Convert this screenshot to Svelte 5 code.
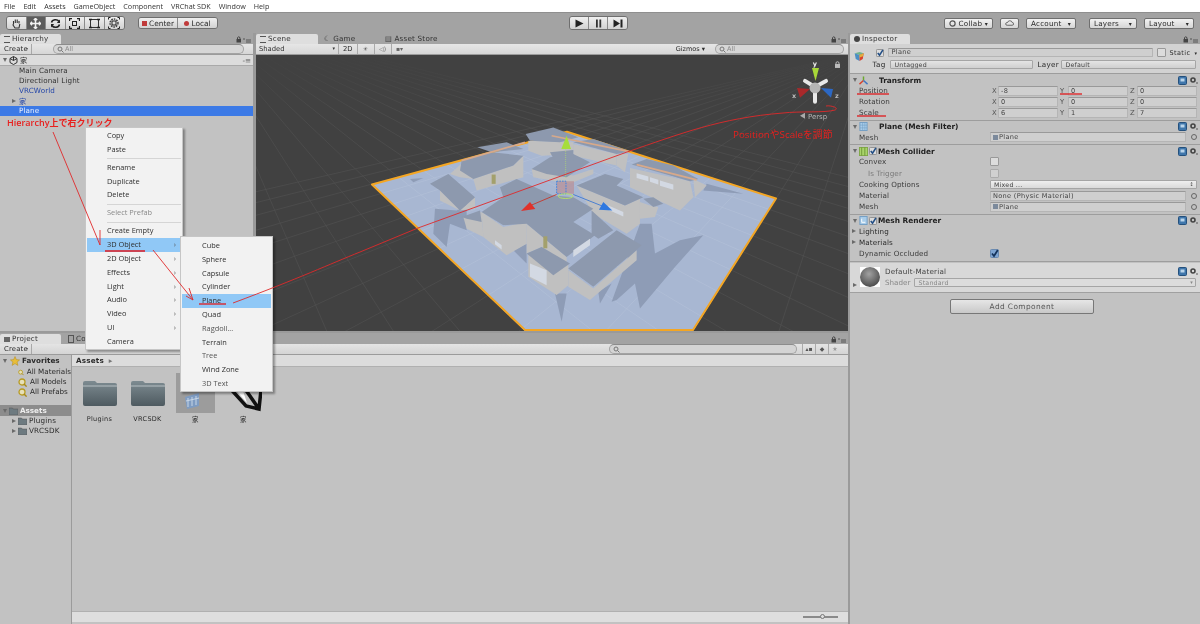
<script>
  const menus = ['File', 'Edit', 'Assets', 'GameObject', 'Component', 'VRChat SDK', 'Window', 'Help'];

  const mainMenu = [
    { t: 'Copy' }, { t: 'Paste' }, { sep: true },
    { t: 'Rename' }, { t: 'Duplicate' }, { t: 'Delete' }, { sep: true },
    { t: 'Select Prefab', off: true }, { sep: true },
    { t: 'Create Empty' },
    { t: '3D Object', sub: true, hl: true },
    { t: '2D Object', sub: true }, { t: 'Effects', sub: true }, { t: 'Light', sub: true },
    { t: 'Audio', sub: true }, { t: 'Video', sub: true }, { t: 'UI', sub: true },
    { t: 'Camera' }
  ];
  const subMenu = ['Cube', 'Sphere', 'Capsule', 'Cylinder', 'Plane', 'Quad', 'Ragdoll...', 'Terrain', 'Tree', 'Wind Zone', '3D Text'];

  const transformRows = [
    { label: 'Position', v: ['-8', '0', '0'] },
    { label: 'Rotation', v: ['0', '0', '0'] },
    { label: 'Scale', v: ['6', '1', '7'] }
  ];

  // scene geometry, in the coordinates of a 3x crop starting at 360,90
  const shadows = [
    '225,355 290,360 320,340 320,420 270,400 260,470 220,430',
    '755,635 840,400 875,400 885,490 960,450 1030,435 945,530 840,655 825,580 770,630',
    '585,610 620,610 605,695',
    '715,605 755,580 720,640',
    '1040,280 1150,310 1030,300',
    '150,265 190,262 160,275',
    '460,480 500,460 500,520'
  ];
  const walls = [
    '505,150 640,155 640,190 545,195 505,180',
    '640,160 770,190 770,225 640,195',
    '770,190 805,190 795,245 770,225',
    '240,300 300,360 345,320 345,355 300,360 240,330',
    '340,265 460,225 490,195 490,260 350,300',
    '270,250 315,210 340,265 300,260',
    '365,365 430,410 500,395 500,460 440,495 370,440',
    '310,380 365,365 370,440 320,415',
    '650,285 795,345 840,325 840,400 800,430 700,370',
    '810,232 990,272 1000,320 960,360 810,290',
    '1000,265 1040,285 1005,320',
    '840,335 870,345 895,350 885,380 840,385',
    '625,540 700,595 830,480 830,510 690,630 625,590',
    '505,490 625,520 625,585 590,615 505,560',
    '515,235 640,255 700,235 700,250 630,280 520,260',
    '500,400 620,500 620,520 545,470 500,490'
  ];
  const roofs = [
    '497,130 580,110 655,140 600,155 510,150',
    '640,155 700,145 810,182 770,190',
    '352,170 440,155 490,175 395,185',
    '305,210 395,185 490,195 460,225 340,265 300,240',
    '210,280 265,250 345,320 300,360 240,300',
    '515,235 570,200 640,190 690,215 620,260 560,250',
    '570,185 640,178 640,210 585,212',
    '365,365 430,320 420,290 470,265 580,315 640,320 700,355 640,395 705,435 620,500 500,400 430,405',
    '650,285 735,250 790,265 770,285 850,320 795,345',
    '815,222 860,205 940,225 1015,265 990,272',
    '850,325 880,320 910,340 880,350',
    '625,535 770,420 845,465 700,590',
    '695,360 760,420 715,445 695,430',
    '305,380 360,360 365,395 320,385',
    '500,490 545,470 630,520 580,555'
  ];
  const panes = [
    '830,248 865,258 865,272 830,262', '870,260 895,268 895,282 870,274', '900,270 940,282 940,298 900,286',
    '510,520 560,540 560,585 510,560',
    '640,480 690,445 690,465 640,500', '745,345 790,365 790,378 745,358', '405,450 425,465 425,478 405,462'
  ];

  // floor grid: two fans of lines out of the vanishing points of the plane's edges
  const fan = (vx, vy, start, step, from, to) => {
    const out = [];
    for (let k = from; k <= to; k++) out.push([vx, vy, start + step * k, 700]);
    return out;
  };
  const grid = [...fan(189, 10, 914, 143, -16, 14), ...fan(870, 49, 460, 200, -12, 10)];
</script>

{#snippet helpGear()}
  <span class="comp-tools">
    <svg width="20" height="9" viewBox="0 0 20 9">
      <rect x="0.5" y="0.5" width="8" height="8" rx="1" fill="#3f76ab" stroke="#24507c" />
      <rect x="2.5" y="2.5" width="4" height="3" fill="#b9d4ea" />
      <circle cx="15" cy="4" r="2" fill="none" stroke="#444" stroke-width="1.6" />
      <circle cx="19" cy="7" r="0.8" fill="#444" />
    </svg>
  </span>
{/snippet}

{#snippet check()}
  <svg class="chk" width="8" height="8" viewBox="0 0 9 9">
    <rect x="0.5" y="0.5" width="8" height="8" rx="1" fill="#dcdcdc" stroke="#8a8a8a" />
    <path d="M2 4.5 L4 7 L7.8 1" fill="none" stroke="#234f86" stroke-width="1.8" />
  </svg>
{/snippet}

{#snippet search()}
  <svg class="glass" width="7" height="7" viewBox="0 0 7 7">
    <circle cx="3" cy="3" r="2" fill="none" stroke="#777" />
    <path d="M4.5 4.5 L6.5 6.5" stroke="#777" />
  </svg>
{/snippet}

{#snippet lockmenu()}
  <span class="lockmenu">
    <svg width="15" height="7" viewBox="0 0 15 7">
      <rect x="0.5" y="3" width="4.5" height="3.5" fill="#444" />
      <path d="M1.5 3 V1.6 Q2.7 0 4 1.6 V3" fill="none" stroke="#444" />
      <path d="M7 3 L9 3 M10 4 H15 M10 6 H15" stroke="#555" />
    </svg>
  </span>
{/snippet}

{#snippet folderIcon()}
  <svg width="9" height="8" viewBox="0 0 9 8">
    <path d="M0 1 H3.5 L4.3 2 H9 V8 H0 Z" fill="#6d7a80" stroke="#555" stroke-width="0.5" />
  </svg>
{/snippet}

{#snippet favIcon()}
  <svg width="9" height="9" viewBox="0 0 9 9">
    <circle cx="4" cy="4" r="3" fill="#e6e0b8" stroke="#b89b20" stroke-width="1.3" />
    <path d="M6 6 L8.6 8.6" stroke="#a88a1a" stroke-width="1.4" />
  </svg>
{/snippet}

{#snippet bigFolder()}
  <svg width="36" height="27" viewBox="0 0 36 27">
    <defs>
      <linearGradient id="fold" x1="0" y1="0" x2="0" y2="1">
        <stop offset="0" stop-color="#7d8b91" />
        <stop offset="1" stop-color="#4e5a60" />
      </linearGradient>
    </defs>
    <path d="M1 3 Q1 1 3 1 H13 L15 3 H33 Q35 3 35 5 V24 Q35 26 33 26 H3 Q1 26 1 24 Z" fill="url(#fold)" />
    <path d="M1 6 H35" stroke="#c9d0d3" stroke-width="0.8" />
  </svg>
{/snippet}

<div class="app">
  <div class="menubar">
    {#each menus as m}<span>{m}</span>{/each}
  </div>

  <div class="toolbar">
    <div class="btn-group tools">
      <button aria-label="Hand"><svg width="11" height="11" viewBox="0 0 11 11"><path d="M2.5 6 V3 M4.3 5 V1.5 M6.2 5 V1.5 M8 5.5 V3 M2.5 6 L2 7 L4 10 H8 L8.8 6" fill="none" stroke="#333" stroke-width="1.1" /></svg></button>
      <button class="on" aria-label="Move"><svg width="11" height="11" viewBox="0 0 11 11"><path d="M5.5 0.5 V10.5 M0.5 5.5 H10.5 M3.8 2 L5.5 0.5 L7.2 2 M3.8 9 L5.5 10.5 L7.2 9 M2 3.8 L0.5 5.5 L2 7.2 M9 3.8 L10.5 5.5 L9 7.2" fill="none" stroke="#f2f2f2" stroke-width="1.5" /></svg></button>
      <button aria-label="Rotate"><svg width="11" height="11" viewBox="0 0 11 11"><path d="M1.5 4.5 A4 3.4 0 0 1 9 3.5 M9.5 6.5 A4 3.4 0 0 1 2 7.5" fill="none" stroke="#222" stroke-width="1.5" /><path d="M10 1.5 V5 H6.8 Z M1 9.5 V6 H4.2 Z" fill="#222" /></svg></button>
      <button aria-label="Scale"><svg width="11" height="11" viewBox="0 0 11 11"><rect x="3.5" y="3.5" width="4" height="4" fill="none" stroke="#222" /><path d="M0.5 3 V0.5 H3 M8 0.5 H10.5 V3 M10.5 8 V10.5 H8 M3 10.5 H0.5 V8" fill="none" stroke="#222" stroke-width="1.3" /></svg></button>
      <button aria-label="Rect"><svg width="11" height="11" viewBox="0 0 11 11"><rect x="1.5" y="1.5" width="8" height="8" fill="none" stroke="#333" /><path d="M0 1.5 H3 M8 1.5 H11 M0 9.5 H3 M8 9.5 H11" stroke="#222" stroke-width="1.4" /></svg></button>
      <button aria-label="Transform"><svg width="12" height="12" viewBox="0 0 12 12"><circle cx="6" cy="6" r="4" fill="none" stroke="#333" stroke-dasharray="1.6 1" stroke-width="1.3" /><rect x="4" y="4" width="4" height="4" fill="none" stroke="#222" /><path d="M0.5 2.5 V0.5 H2.5 M9.5 0.5 H11.5 V2.5 M11.5 9.5 V11.5 H9.5 M2.5 11.5 H0.5 V9.5" fill="none" stroke="#222" /></svg></button>
    </div>
    <div class="btn-group pivot">
      <button><i class="pv"></i>Center</button>
      <button><i class="pv round"></i>Local</button>
    </div>
    <div class="play-slot">
      <div class="btn-group play">
        <button aria-label="Play"><svg width="9" height="9" viewBox="0 0 9 9"><path d="M0.5 0.5 L8.5 4.5 L0.5 8.5 Z" fill="#222" /></svg></button>
        <button aria-label="Pause"><svg width="9" height="9" viewBox="0 0 9 9"><path d="M2 0.5 H3.8 V8.5 H2 Z M5.4 0.5 H7.2 V8.5 H5.4 Z" fill="#333" /></svg></button>
        <button aria-label="Step"><svg width="10" height="9" viewBox="0 0 10 9"><path d="M0.5 0.5 L7 4.5 L0.5 8.5 Z M7.5 0.5 H9.5 V8.5 H7.5 Z" fill="#222" /></svg></button>
      </div>
    </div>
    <div class="right-tools">
      <button class="drop collab"><svg width="7" height="7" viewBox="0 0 7 7"><circle cx="3.5" cy="3.5" r="2.6" fill="none" stroke="#555" stroke-width="1.2" /></svg>Collab<b>▾</b></button>
      <button class="drop cloud" aria-label="Cloud"><svg width="12" height="8" viewBox="0 0 12 8"><path d="M3 7 H9.5 Q11.5 7 11.5 5 Q11.5 3.4 9.6 3.4 Q9 0.8 6.4 1 Q4 1 3.6 3.2 Q0.8 3.4 0.8 5.2 Q0.8 7 3 7 Z" fill="none" stroke="#444" /></svg></button>
      <button class="drop account">Account<b>▾</b></button>
      <button class="drop layers">Layers<b>▾</b></button>
      <button class="drop layout">Layout<b>▾</b></button>
    </div>
  </div>

  <div class="workspace">
    <div class="left-stack">
      <div class="upper">
        <section class="hierarchy">
          <div class="tabs">
            <div class="tab active t-hier"><i class="list-ic"></i>Hierarchy</div>
            {@render lockmenu()}
          </div>
          <div class="panel-bar">
            <span class="create">Create</span>
            <div class="searchbox hier-search">{@render search()}<span>All</span></div>
          </div>
          <div class="scene-row">
            <span class="tri down"></span>
            <svg width="9" height="9" viewBox="0 0 9 9"><path d="M4.5 0.5 L8 2.5 V6.5 L4.5 8.5 L1 6.5 V2.5 Z M4.5 0.5 V4.5 M1 2.5 L4.5 4.5 L8 2.5" fill="none" stroke="#333" /></svg>
            <span class="cjk">家</span>
            <span class="row-menu">-≡</span>
          </div>
          <div class="h-row">Main Camera</div>
          <div class="h-row">Directional Light</div>
          <div class="h-row prefab">VRCWorld</div>
          <div class="h-row prefab has-tri"><span class="tri right"></span><span class="cjk">家</span></div>
          <div class="h-row selected">Plane</div>
        </section>

        <section class="scene">
          <div class="tabs">
            <div class="tab active t-scene"><i class="list-ic"></i>Scene</div>
            <div class="tab t-game">☾ Game</div>
            <div class="tab t-store">▤ Asset Store</div>
            {@render lockmenu()}
          </div>
          <div class="panel-bar scene-bar">
            <span class="shaded">Shaded<b>▾</b></span>
            <span class="sb-btn">2D</span>
            <span class="sb-btn ic">☀</span>
            <span class="sb-btn ic">◁)</span>
            <span class="sb-btn ic">▪▾</span>
            <span class="gizmos">Gizmos ▾</span>
            <div class="searchbox scene-search">{@render search()}<span>All</span></div>
          </div>
          <svg class="viewport" viewBox="256 54 592 277" preserveAspectRatio="none">
            <defs>
              <clipPath id="planeClip"><polygon points="372,184 567,131 776,198 693,331 525,331" /></clipPath>
              <linearGradient id="far" x1="0" y1="0" x2="0" y2="1">
                <stop offset="0" stop-color="#414141" />
                <stop offset="1" stop-color="#414141" stop-opacity="0" />
              </linearGradient>
            </defs>
            <rect x="256" y="54" width="592" height="277" fill="#414141" />
            <g stroke="#525252" stroke-width="0.6">
              {#each grid as g}<line x1={g[0]} y1={g[1]} x2={g[2]} y2={g[3]} />{/each}
            </g>
            <rect x="256" y="54" width="592" height="60" fill="url(#far)" />
            <polygon points="372,184 567,131 776,198 693,331 525,331" fill="#a8b7d2" />
            <g stroke="#b4c1d8" stroke-width="0.6" clip-path="url(#planeClip)">
              {#each grid as g}<line x1={g[0]} y1={g[1]} x2={g[2]} y2={g[3]} />{/each}
            </g>
            <polygon points="372,184 567,131 776,198 693,330 525,330" fill="none" stroke="#f4a623" stroke-width="2" stroke-linejoin="round" />
            <g transform="translate(360 90) scale(0.3333)">
              {#each shadows as p}<polygon points={p} fill="#8e9cb6" />{/each}
              {#each walls as p}<polygon points={p} fill="#c0c0c0" />{/each}
              {#each roofs as p}<polygon points={p} fill="#8d99ae" />{/each}
              {#each panes as p}<polygon points={p} fill="#d3d9e3" />{/each}
              <rect x="395" y="252" width="12" height="28" fill="#a3a06c" />
              <rect x="550" y="438" width="12" height="36" fill="#a3a06c" />
              <path d="M305 210 L495 155 M575 135 L805 182 M830 222 L1010 268" stroke="#d7a98a" stroke-width="5" fill="none" />
              <path d="M617 175 V265" stroke="#b5e06a" stroke-width="2" stroke-dasharray="3 3" />
              <path d="M505 348 L590 312" stroke="#c04038" stroke-width="3" />
              <path d="M640 312 L730 348" stroke="#4a7fd0" stroke-width="3" />
              <rect x="590" y="272" width="52" height="38" fill="#b98f96" opacity="0.7" />
              <rect x="590" y="272" width="28" height="38" fill="none" stroke="#3f86e0" stroke-width="3" stroke-dasharray="5 3" />
              <ellipse cx="617" cy="317" rx="22" ry="7" fill="none" stroke="#b5e06a" stroke-width="3" />
              <polygon points="620,135 604,175 633,175" fill="#a6dd3c" />
              <polygon points="483,362 510,335 526,356" fill="#e0312a" />
              <polygon points="757,360 730,335 717,358" fill="#2e78e0" />
            </g>
            <g>
              <path d="M805 80 L815 86 L826 80 M815 86 V101" stroke="#e8e8e8" stroke-width="4" stroke-linecap="round" fill="none" />
              <circle cx="815" cy="87" r="5.5" fill="#b5b5b5" />
              <polygon points="812,67 819,67 815.5,80" fill="#a8d838" />
              <polygon points="797,87 810,88 800,97" fill="#a8282a" />
              <polygon points="821,87 833,88 831,97" fill="#2c68c4" />
              <text x="815" y="65" class="axis">y</text>
              <text x="794" y="97" class="axis grey">x</text>
              <text x="837" y="97" class="axis grey">z</text>
              <rect x="835" y="63" width="5" height="4" fill="#bbb" />
              <path d="M836 63 V61.5 Q837.5 60 839 61.5 V63" fill="none" stroke="#bbb" />
              <text x="808" y="118" class="persp">Persp</text>
              <path d="M800 115 L805 112 V118 Z" fill="#aaa" />
            </g>
          </svg>
        </section>
      </div>

      <section class="project">
        <div class="tabs">
          <div class="tab active t-proj"><i class="folder-ic"></i>Project</div>
          <div class="tab t-cons"><i class="cons-ic"></i>Console</div>
          {@render lockmenu()}
        </div>
        <div class="panel-bar proj-bar">
          <span class="create">Create</span>
          <div class="searchbox proj-search">{@render search()}</div>
          <span class="sb-btn pic">▴▪</span>
          <span class="sb-btn pic">◆</span>
          <span class="sb-btn pic star">★</span>
        </div>
        <div class="proj-body">
          <aside class="tree">
            <div class="t-row fav">
              <span class="tri down"></span>
              <svg class="star-ic" width="10" height="10" viewBox="0 0 10 10"><path d="M5 0.5 L6.3 3.6 L9.6 3.9 L7.1 6.1 L7.9 9.4 L5 7.6 L2.1 9.4 L2.9 6.1 L0.4 3.9 L3.7 3.6 Z" fill="#e8bd3a" stroke="#b08a1c" stroke-width="0.5" /></svg>
              <span>Favorites</span>
            </div>
            <div class="t-row in2">{@render favIcon()}<span>All Materials</span></div>
            <div class="t-row in2">{@render favIcon()}<span>All Models</span></div>
            <div class="t-row in2">{@render favIcon()}<span>All Prefabs</span></div>
            <div class="t-gap"></div>
            <div class="t-row assets"><span class="tri down"></span>{@render folderIcon()}<span>Assets</span></div>
            <div class="t-row in1"><span class="tri right"></span>{@render folderIcon()}<span>Plugins</span></div>
            <div class="t-row in1"><span class="tri right"></span>{@render folderIcon()}<span>VRCSDK</span></div>
          </aside>
          <div class="browser">
            <div class="crumb">Assets <span>▸</span></div>
            <div class="tiles">
              <div class="tile">
                <div class="tile-art">{@render bigFolder()}</div>
                <span>Plugins</span>
              </div>
              <div class="tile">
                <div class="tile-art">{@render bigFolder()}</div>
                <span>VRCSDK</span>
              </div>
              <div class="tile">
                <div class="tile-art sel-art">
                  <svg width="18" height="18" viewBox="0 0 18 18"><path d="M1 5 L15 1 V14 L3 17 Z" fill="#7f9cc2" /><path d="M4 6 V15 M8 5 V14 M12 4 V13 M2 9 L15 6" stroke="#c8d6e6" stroke-width="1" /></svg>
                </div>
                <span class="cjk">家</span>
              </div>
              <div class="tile">
                <div class="tile-art black">
                  <svg width="36" height="30" viewBox="0 0 36 30"><path d="M2 4 L20 24 L33 27 L35 8 M17 4 L33 27" fill="none" stroke="#111" stroke-width="3.5" /><path d="M8 6 L21 21 L16 6 Z" fill="#fff" /></svg>
                </div>
                <span class="cjk">家</span>
              </div>
            </div>
            <div class="statusbar">
              <div class="zoom-slider"><i></i></div>
            </div>
          </div>
        </div>
      </section>
    </div>

    <section class="inspector">
      <div class="tabs">
        <div class="tab active t-insp"><i class="info-ic"></i>Inspector</div>
        {@render lockmenu()}
      </div>
      <div class="go-head">
        <svg class="cube" width="15" height="15" viewBox="0 0 15 15">
          <path d="M1 3 L8 1 L14 3 L8 5.5 Z" fill="#6fb38a" />
          <path d="M1 3 L8 5.5 V14 L2.5 11 Z" fill="#4a8ec4" />
          <path d="M8 5.5 L14 3 L12.5 11 L8 14 Z" fill="#d8432e" />
          <path d="M8 5.5 L14 3 L13 7 L8 9 Z" fill="#e2b13c" />
        </svg>
        <div class="go-lines">
          <div class="go-line">
            {@render check()}
            <div class="field name">Plane</div>
            <span class="box"></span><span class="static">Static</span><span class="mini">▾</span>
          </div>
          <div class="go-line second">
            <span class="lab">Tag</span>
            <div class="popup tag">Untagged</div>
            <span class="lab layer">Layer</span>
            <div class="popup lay">Default</div>
          </div>
        </div>
      </div>

      <div class="comp">
        <div class="comp-head"><span class="tri down"></span>
          <svg class="ci" width="9" height="9" viewBox="0 0 10 10"><path d="M5 5 V0.5" stroke="#6aa82c" stroke-width="1.6" /><path d="M5 5 L0.5 9" stroke="#d8432e" stroke-width="1.6" /><path d="M5 5 L9.5 9" stroke="#3f76c4" stroke-width="1.6" /></svg>
          <b class="gap-title">Transform</b>{@render helpGear()}
        </div>
        {#each transformRows as r}
          <div class="prop">
            <span class="p-lab">{r.label}</span>
            <div class="xyz">
              {#each ['X', 'Y', 'Z'] as a, i}
                <span class="ax">{a}</span><div class="field num">{r.v[i]}</div>
              {/each}
            </div>
          </div>
        {/each}
      </div>

      <div class="comp">
        <div class="comp-head"><span class="tri down"></span>
          <svg class="ci" width="9" height="9" viewBox="0 0 10 10"><rect x="1" y="0.5" width="8" height="9" fill="#a9cdea" stroke="#6f9cc4" /><path d="M1 3.5 H9 M1 6.5 H9 M4 0.5 V9.5 M6.5 0.5 V9.5" stroke="#6f9cc4" stroke-width="0.6" /></svg>
          <b class="gap-title">Plane (Mesh Filter)</b>{@render helpGear()}
        </div>
        <div class="prop"><span class="p-lab">Mesh</span><div class="field obj"><i class="mesh-ic"></i>Plane</div><span class="dot"></span></div>
      </div>

      <div class="comp">
        <div class="comp-head"><span class="tri down"></span>
          <svg class="ci" width="9" height="9" viewBox="0 0 10 10"><rect x="0.5" y="0.5" width="9" height="9" fill="#a9d46a" stroke="#7ea744" /><path d="M3 0.5 V9.5 M6.5 0.5 V9.5" stroke="#6c9436" /></svg>
          {@render check()}<b>Mesh Collider</b>{@render helpGear()}
        </div>
        <div class="prop"><span class="p-lab">Convex</span><span class="box"></span></div>
        <div class="prop dim"><span class="p-lab ind">Is Trigger</span><span class="box"></span></div>
        <div class="prop"><span class="p-lab">Cooking Options</span><div class="popup mixed">Mixed ...<em>↕</em></div></div>
        <div class="prop"><span class="p-lab">Material</span><div class="field obj">None (Physic Material)</div><span class="dot"></span></div>
        <div class="prop"><span class="p-lab">Mesh</span><div class="field obj"><i class="mesh-ic"></i>Plane</div><span class="dot"></span></div>
      </div>

      <div class="comp">
        <div class="comp-head"><span class="tri down"></span>
          <svg class="ci" width="9" height="9" viewBox="0 0 10 10"><rect x="1" y="0.5" width="8" height="9" fill="#a9cdea" stroke="#6f9cc4" /><path d="M3 3 V7 H7" stroke="#fff" fill="none" /></svg>
          {@render check()}<b>Mesh Renderer</b>{@render helpGear()}
        </div>
        <div class="prop fold"><span class="tri right"></span><span>Lighting</span></div>
        <div class="prop fold"><span class="tri right"></span><span>Materials</span></div>
        <div class="prop dyn"><span class="p-lab">Dynamic Occluded</span><svg width="9" height="9" viewBox="0 0 9 9"><rect x="0.5" y="0.5" width="8" height="8" rx="1" fill="#7fa5d2" stroke="#6a8ab0" /><path d="M2 4.5 L4 7 L7.8 1" fill="none" stroke="#16345c" stroke-width="1.8" /></svg></div>
      </div>

      <div class="material">
        <span class="tri right mat-tri"></span>
        <div class="ball"></div>
        <div class="mat-text">
          <div class="mat-name">Default-Material{@render helpGear()}</div>
          <div class="mat-shader"><span>Shader</span><div class="popup shader">Standard<em>▾</em></div></div>
        </div>
      </div>

      <div class="add-wrap"><button class="add">Add Component</button></div>
    </section>
  </div>

  <!-- context menu and red annotations sit on top of the editor -->
  <div class="ctx main-ctx">
    {#each mainMenu as m}
      {#if m.sep}
        <div class="ctx-sep"></div>
      {:else}
        <div class="ctx-item" class:hl={m.hl} class:off={m.off}>{m.t}{#if m.sub}<span class="chev">›</span>{/if}</div>
      {/if}
    {/each}
  </div>
  <div class="ctx sub-ctx">
    {#each subMenu as s}
      <div class="ctx-item" class:hl={s === 'Plane'} class:soft={s === 'Ragdoll...' || s === 'Tree' || s === '3D Text'}>{s}</div>
    {/each}
  </div>

  <div class="note n1">Hierarchy上で右クリック</div>
  <div class="note n2">PositionやScaleを調節</div>

  <svg class="marks" viewBox="0 0 1200 624">
    <g fill="none" stroke="#e0292a" stroke-width="0.9">
      <path d="M53 132 L100 245 M100 230 V245" />
      <path d="M153 250 L193 300 M189 288 L193 300 L186 296" />
      <path d="M233 303 C300 278 330 264 360 252 L418 228 L627 152 C680 134 720 118 783 113 C800 111 825 113 835 110 C840 108 830 105 826 106" />
    </g>
    <g fill="none" stroke="#e0191c" stroke-width="1.3">
      <path d="M105 251 H145" />
      <path d="M199 304 H226" />
      <path d="M857 94 H889" />
      <path d="M1060 94 H1082" />
      <path d="M857 116 H886" />
    </g>
  </svg>
</div>

<style>
  :global(body) {
    margin: 0;
    background: #a3a3a3;
  }

  .app {
    position: relative;
    width: 1200px;
    height: 624px;
    overflow: hidden;
    display: flex;
    flex-direction: column;
    background: #a3a3a3;
    font-family: "DejaVu Sans", "Noto Sans CJK JP", sans-serif;
    font-size: 7.2px;
    color: #2b2b2b;
    filter: blur(0.3px);
  }

  button {
    font: inherit;
    color: inherit;
    padding: 0;
    margin: 0;
  }

  .cjk {
    font-family: "Noto Sans CJK JP", sans-serif;
    line-height: 8px;
  }

  .menubar {
    height: 12px;
    background: #fff;
    display: flex;
    align-items: center;
    gap: 8px;
    padding-left: 4px;
    font-family: "Open Sans", sans-serif;
    font-size: 7.2px;
    color: #333;
  }

  .toolbar {
    height: 21px;
    display: flex;
    align-items: center;
    border-top: 1px solid #8f8f8f;
    box-sizing: border-box;
    padding-left: 6px;
  }

  .btn-group {
    display: flex;
    border: 1px solid #6f6f6f;
    border-radius: 3px;
    overflow: hidden;
  }

  .btn-group button {
    border: 0;
    border-right: 1px solid #8a8a8a;
    background: linear-gradient(#f0f0f0, #d2d2d2);
    display: flex;
    align-items: center;
    justify-content: center;
  }

  .btn-group button:last-child {
    border-right: 0;
  }

  .tools button {
    width: 19.5px;
    height: 12px;
  }

  .tools button.on {
    background: #5c5c5c;
  }

  .pivot {
    margin-left: 13px;
  }

  .pivot button {
    height: 10px;
    width: 39px;
    gap: 2px;
    font-size: 7.4px;
  }

  .pv {
    display: block;
    width: 5px;
    height: 5px;
    background: #c03a3a;
  }

  .pv.round {
    border-radius: 50%;
  }

  .play-slot {
    position: absolute;
    left: 569px;
    top: 16px;
  }

  .play button {
    width: 19px;
    height: 12px;
  }

  .right-tools {
    margin-left: auto;
    display: flex;
    gap: 7px;
    padding-right: 6px;
  }

  .drop {
    height: 11px;
    box-sizing: border-box;
    border: 1px solid #6f6f6f;
    border-radius: 2px;
    background: linear-gradient(#f2f2f2, #d6d6d6);
    display: flex;
    align-items: center;
    justify-content: space-between;
    padding: 0 4px;
    font-size: 7.2px;
    letter-spacing: 0.2px;
    gap: 2px;
  }

  .drop b {
    font-size: 6px;
    font-weight: normal;
  }

  .collab { width: 49px; }
  .cloud { width: 19px; justify-content: center; }
  .account { width: 50px; margin-right: 6px; }
  .layers { width: 48px; }
  .layout { width: 50px; }

  .workspace {
    flex: 1;
    display: flex;
    min-height: 0;
    background: #9a9a9a;
  }

  .left-stack {
    width: 848px;
    display: flex;
    flex-direction: column;
  }

  .upper {
    height: 298px;
    display: flex;
    gap: 3px;
  }

  .hierarchy {
    width: 253px;
    background: #c2c2c2;
  }

  .scene {
    flex: 1;
    display: flex;
    flex-direction: column;
    min-width: 0;
  }

  .tabs {
    height: 11px;
    display: flex;
    align-items: flex-end;
    background: #a3a3a3;
    position: relative;
  }

  .tab {
    height: 10px;
    line-height: 10px;
    padding-left: 4px;
    display: flex;
    align-items: center;
    gap: 2px;
    color: #333;
    letter-spacing: 0.2px;
    box-sizing: border-box;
  }

  .tab.active {
    background: #dedede;
    border-radius: 2px 2px 0 0;
  }

  .t-hier { width: 61px; }
  .t-scene { width: 62px; }
  .t-game { width: 63px; padding-left: 6px; }
  .t-store { width: 70px; }
  .t-proj { width: 61px; }
  .t-insp { width: 60px; }

  .t-cons {
    margin-left: 7px;
    padding-left: 0;
    white-space: nowrap;
  }

  .cons-ic {
    display: block;
    width: 4px;
    height: 6px;
    border: 1px solid #555;
    flex: none;
  }

  .list-ic {
    display: block;
    width: 6px;
    height: 5px;
    border-top: 1px solid #555;
    border-bottom: 1px solid #555;
  }

  .folder-ic {
    display: block;
    width: 6px;
    height: 5px;
    background: #666;
  }

  .info-ic {
    display: block;
    width: 6px;
    height: 6px;
    border-radius: 50%;
    background: #444;
  }

  .lockmenu {
    margin-left: auto;
    padding-right: 2px;
    line-height: 0;
    padding-bottom: 1px;
  }

  .panel-bar {
    height: 10px;
    background: linear-gradient(#e6e6e6, #d6d6d6);
    border-bottom: 1px solid #9b9b9b;
    display: flex;
    align-items: center;
    position: relative;
  }

  .create {
    width: 32px;
    padding-left: 4px;
    box-sizing: border-box;
    border-right: 1px solid #a8a8a8;
    height: 10px;
    line-height: 10px;
    font-size: 6.8px;
    letter-spacing: 0.2px;
    position: relative;
  }

  .create::after {
    content: "";
    position: absolute;
    right: 3px;
    top: 4px;
    border-left: 1.5px solid transparent;
    border-right: 1.5px solid transparent;
    border-top: 2.5px solid #555;
  }

  .searchbox {
    height: 8px;
    border: 1px solid #a3a3a3;
    border-top-color: #8c8c8c;
    border-radius: 5px;
    background: #d6d6d6;
    display: flex;
    align-items: center;
    gap: 1px;
    padding-left: 3px;
    color: #8a8a8a;
    font-size: 6.5px;
  }

  .hier-search {
    width: 186px;
    margin-left: 21px;
  }

  .scene-row {
    height: 10px;
    background: #dcdcdc;
    display: flex;
    align-items: center;
    gap: 2px;
    padding-left: 3px;
    border-bottom: 1px solid #a9a9a9;
  }

  .row-menu {
    margin-left: auto;
    padding-right: 2px;
    color: #555;
  }

  .tri {
    display: inline-block;
    width: 0;
    height: 0;
    flex: none;
  }

  .tri.down {
    border-left: 2.5px solid transparent;
    border-right: 2.5px solid transparent;
    border-top: 4px solid #6a6a6a;
  }

  .tri.right {
    border-top: 2.5px solid transparent;
    border-bottom: 2.5px solid transparent;
    border-left: 4px solid #6a6a6a;
  }

  .h-row {
    height: 10px;
    line-height: 10px;
    padding-left: 19px;
    letter-spacing: 0.1px;
    color: #333;
  }

  .h-row.prefab {
    color: #2446a8;
  }

  .h-row.has-tri {
    padding-left: 12px;
    display: flex;
    align-items: center;
    gap: 3px;
  }

  .h-row.selected {
    background: #3c7ae6;
    color: #e8efff;
  }

  .scene-bar .shaded {
    width: 82px;
    padding: 0 3px;
    box-sizing: border-box;
    display: flex;
    justify-content: space-between;
    color: #333;
    font-size: 6.8px;
  }

  .shaded b {
    font-weight: normal;
    font-size: 5px;
  }

  .sb-btn {
    height: 10px;
    line-height: 10px;
    border-left: 1px solid #aaa;
    padding: 0 4px;
    font-size: 6.8px;
    text-align: center;
  }

  .sb-btn.ic {
    width: 12px;
    padding: 0 2px;
    font-size: 6px;
    color: #666;
  }

  .gizmos {
    margin-left: auto;
    font-size: 6.5px;
    padding-right: 10px;
  }

  .scene-search {
    width: 124px;
    margin-right: 4px;
  }

  .viewport {
    flex: 1;
    display: block;
    width: 100%;
    min-height: 0;
    font-family: "DejaVu Sans", sans-serif;
  }

  .axis {
    font-size: 6.5px;
    fill: #eee;
    font-weight: bold;
    text-anchor: middle;
  }

  .axis.grey {
    fill: #bbb;
  }

  .persp {
    font-size: 7px;
    fill: #b5b5b5;
  }

  .project {
    flex: 1;
    margin-top: 2px;
    display: flex;
    flex-direction: column;
    min-height: 0;
    background: #c2c2c2;
  }

  .proj-bar {
    background: linear-gradient(#e4e4e4, #d4d4d4);
  }

  .proj-search {
    width: 183px;
    margin-left: auto;
    margin-right: 5px;
    background: #d4d4d4;
  }

  .sb-btn.pic {
    width: 12px;
    padding: 0;
    color: #555;
    font-size: 6px;
  }

  .sb-btn.star {
    color: #999;
    margin-right: 7px;
  }

  .proj-body {
    flex: 1;
    display: flex;
    min-height: 0;
  }

  .tree {
    width: 71px;
    border-right: 1px solid #9b9b9b;
    overflow: hidden;
    flex: none;
  }

  .t-row {
    height: 10px;
    line-height: 10px;
    display: flex;
    align-items: center;
    white-space: nowrap;
    gap: 2px;
  }

  .t-row.fav {
    padding-left: 3px;
    font-weight: bold;
    height: 12px;
    gap: 2px;
  }

  .t-row.fav .star-ic {
    margin-left: 1px;
  }

  .t-row.in2 {
    padding-left: 18px;
    gap: 3px;
  }

  .t-gap {
    height: 8px;
  }

  .t-row.assets {
    background: #8c8c8c;
    color: #eee;
    font-weight: bold;
    padding-left: 3px;
    height: 11px;
  }

  .t-row.in1 {
    padding-left: 12px;
    letter-spacing: 0.2px;
  }

  .browser {
    flex: 1;
    display: flex;
    flex-direction: column;
    min-width: 0;
  }

  .crumb {
    height: 11px;
    line-height: 11px;
    padding-left: 4px;
    font-weight: bold;
    background: #dcdcdc;
    border-bottom: 1px solid #b0b0b0;
    letter-spacing: 0.2px;
  }

  .crumb span {
    color: #777;
    font-weight: normal;
    margin-left: 2px;
  }

  .tiles {
    flex: 1;
    display: flex;
    gap: 9px;
    padding: 6px 0 0 8px;
  }

  .tile {
    width: 39px;
    display: flex;
    flex-direction: column;
    align-items: center;
    gap: 2px;
    font-size: 6.5px;
    letter-spacing: 0.3px;
    line-height: 8px;
  }

  .tile-art {
    width: 39px;
    height: 40px;
    display: flex;
    align-items: center;
    justify-content: center;
  }

  .tile-art.black {
    padding-top: 8px;
    box-sizing: border-box;
  }

  .sel-art {
    background: #9c9c9c;
    align-items: flex-end;
    padding: 0 6px 3px 0;
    box-sizing: border-box;
  }

  .statusbar {
    height: 10px;
    background: #dedede;
    margin-bottom: 2px;
    border-top: 1px solid #b0b0b0;
    display: flex;
    align-items: center;
    justify-content: flex-end;
    padding-right: 10px;
  }

  .zoom-slider {
    width: 35px;
    height: 2px;
    background: #8a8a8a;
    position: relative;
  }

  .zoom-slider i {
    position: absolute;
    left: 17px;
    top: -2px;
    width: 5px;
    height: 5px;
    border-radius: 50%;
    background: #ddd;
    border: 1px solid #777;
    box-sizing: border-box;
  }

  .inspector {
    width: 350px;
    margin-left: 2px;
    background: #c2c2c2;
    display: flex;
    flex-direction: column;
    min-width: 0;
  }

  .go-head {
    height: 30px;
    box-sizing: border-box;
    background: #d2d2d2;
    border-bottom: 1px solid #9d9d9d;
    display: flex;
    padding: 4px 0 0 4px;
    gap: 5px;
  }

  .cube {
    margin-top: 1px;
  }

  .go-lines {
    flex: 1;
    display: flex;
    flex-direction: column;
    gap: 3px;
    padding-right: 3px;
  }

  .go-line {
    display: flex;
    align-items: center;
    height: 9px;
    gap: 4px;
  }

  .go-line :global(.chk) {
    margin-left: 7px;
  }

  .field {
    box-sizing: border-box;
    background: #cfcfcf;
    border: 1px solid #b5b5b5;
    border-top-color: #999;
    border-radius: 1px;
    padding-left: 2px;
    height: 9px;
    line-height: 7px;
    font-size: 6.6px;
    letter-spacing: 0.3px;
    color: #444;
    white-space: nowrap;
  }

  .field.name {
    width: 265px;
  }

  .box {
    display: inline-block;
    width: 7px;
    height: 7px;
    border: 1px solid #999;
    border-radius: 1px;
    background: #dcdcdc;
    flex: none;
  }

  .static {
    font-size: 6.5px;
    letter-spacing: 0.4px;
    margin-left: -1px;
  }

  .mini {
    font-size: 5px;
  }

  .go-line.second {
    gap: 0;
  }

  .lab {
    width: 15px;
    margin-left: 3px;
    margin-right: 3px;
    letter-spacing: 0.3px;
  }

  .lab.layer {
    width: 23px;
    margin-left: 4px;
    margin-right: 1px;
  }

  .popup {
    box-sizing: border-box;
    height: 9px;
    line-height: 7px;
    background: linear-gradient(#e4e4e4, #cfcfcf);
    border: 1px solid #a5a5a5;
    border-radius: 1px;
    padding-left: 3px;
    font-size: 6.3px;
    letter-spacing: 0.2px;
    position: relative;
    color: #444;
  }

  .popup em {
    position: absolute;
    right: 2px;
    top: 0;
    font-style: normal;
    font-size: 5px;
  }

  .popup.tag {
    width: 143px;
  }

  .popup.lay {
    width: 135px;
  }

  .comp {
    border-bottom: 1px solid #9d9d9d;
    padding-bottom: 1.5px;
  }

  .comp-head {
    height: 10px;
    margin-top: 1px;
    display: flex;
    align-items: center;
    padding-left: 3px;
    gap: 1px;
    font-size: 7.4px;
    color: #222;
  }

  .comp-head .ci {
    margin-left: 1px;
  }

  .gap-title {
    margin-left: 10px;
  }

  .comp-tools {
    margin-left: auto;
    padding-right: 2px;
    line-height: 0;
  }

  .prop {
    height: 11px;
    display: flex;
    align-items: center;
    padding-left: 9px;
    letter-spacing: 0.1px;
  }

  .p-lab {
    width: 131px;
    flex: none;
    color: #3b3b3b;
  }

  .p-lab.ind {
    padding-left: 9px;
    box-sizing: border-box;
  }

  .prop.dim {
    height: 12px;
    opacity: 0.55;
  }

  .prop.dyn {
    height: 12px;
  }

  .xyz {
    flex: 1;
    display: grid;
    grid-template-columns: 8px 60px 10px 60px 9px 60px;
    align-items: center;
  }

  .ax {
    color: #555;
    font-size: 6.8px;
    padding-left: 2px;
  }

  .field.num {
    width: 60px;
    height: 10px;
    line-height: 8px;
  }

  .field.obj {
    width: 196px;
    height: 10px;
    line-height: 8px;
    display: flex;
    align-items: center;
    gap: 1px;
  }

  .mesh-ic {
    display: block;
    width: 5px;
    height: 5px;
    background: #7c8a9c;
    flex: none;
  }

  .dot {
    width: 4px;
    height: 4px;
    border-radius: 50%;
    border: 1px solid #666;
    margin-left: 5px;
    flex: none;
  }

  .popup.mixed {
    width: 207px;
    background: linear-gradient(#efefef, #dadada);
  }

  .prop.fold {
    padding-left: 2px;
    gap: 3px;
  }

  .material {
    height: 30px;
    background: #d8d8d8;
    border-bottom: 1px solid #a0a0a0;
    display: flex;
    padding: 3px 0 0 10px;
    box-sizing: border-box;
    margin-top: 1px;
    position: relative;
  }

  .mat-tri {
    position: absolute;
    left: 3px;
    top: 20px;
  }

  .ball {
    width: 20px;
    height: 20px;
    margin: 1px 5px 0 0;
    background: #fff;
    flex: none;
  }

  .ball::before {
    content: "";
    display: block;
    width: 20px;
    height: 20px;
    border-radius: 50%;
    background: radial-gradient(circle at 45% 35%, #a2a2a2 0, #6a6a6a 50%, #2e2e2e 100%);
  }

  .mat-text {
    flex: 1;
    display: flex;
    flex-direction: column;
    gap: 1px;
  }

  .mat-name {
    display: flex;
    letter-spacing: 0.2px;
    height: 11px;
    align-items: center;
    color: #444;
  }

  .mat-shader {
    display: flex;
    align-items: center;
    gap: 4px;
    color: #888;
    padding-right: 4px;
  }

  .popup.shader {
    flex: 1;
    color: #888;
    background: #dcdcdc;
  }

  .add-wrap {
    display: flex;
    justify-content: center;
    padding: 6px 6px 0 0;
  }

  .add {
    width: 144px;
    height: 15px;
    border: 1px solid #777;
    border-radius: 2px;
    background: linear-gradient(#e6e6e6, #c8c8c8);
    letter-spacing: 0.4px;
    color: #555;
    font-size: 7.4px;
  }

  .ctx {
    position: absolute;
    background: #f2f2f2;
    border: 1px solid #c6c6c6;
    box-shadow: 2px 2px 2px rgba(0, 0, 0, 0.35);
    box-sizing: border-box;
    padding: 1px 1px;
    font-family: "Open Sans", sans-serif;
    font-size: 7.4px;
    color: #2f2f2f;
  }

  .main-ctx {
    left: 85px;
    top: 127px;
    width: 98px;
    height: 223px;
  }

  .sub-ctx {
    left: 180px;
    top: 236px;
    width: 93px;
    height: 156px;
    padding-top: 2px;
  }

  .ctx-item {
    height: 13.8px;
    line-height: 13.8px;
    padding-left: 20px;
    position: relative;
  }

  .ctx-item.hl {
    background: #90c8f6;
  }

  .ctx-item.off {
    color: #8a8a8a;
  }

  .ctx-item.soft {
    color: #555;
  }

  .ctx-sep {
    height: 1px;
    margin: 1.6px 0 1.6px 20px;
    background: #d5d5d5;
  }

  .chev {
    position: absolute;
    right: 5px;
    top: 0;
    color: #555;
  }

  .note {
    position: absolute;
    color: #e8201e;
    font-family: "Open Sans", "Noto Sans CJK JP", sans-serif;
    white-space: nowrap;
    pointer-events: none;
  }

  .n1 {
    left: 7px;
    top: 117px;
    font-size: 9px;
    line-height: 12px;
    font-weight: 600;
  }

  .n2 {
    left: 733px;
    top: 129px;
    font-size: 9.8px;
    line-height: 12px;
  }

  .marks {
    position: absolute;
    inset: 0;
    width: 1200px;
    height: 624px;
    pointer-events: none;
  }
</style>
